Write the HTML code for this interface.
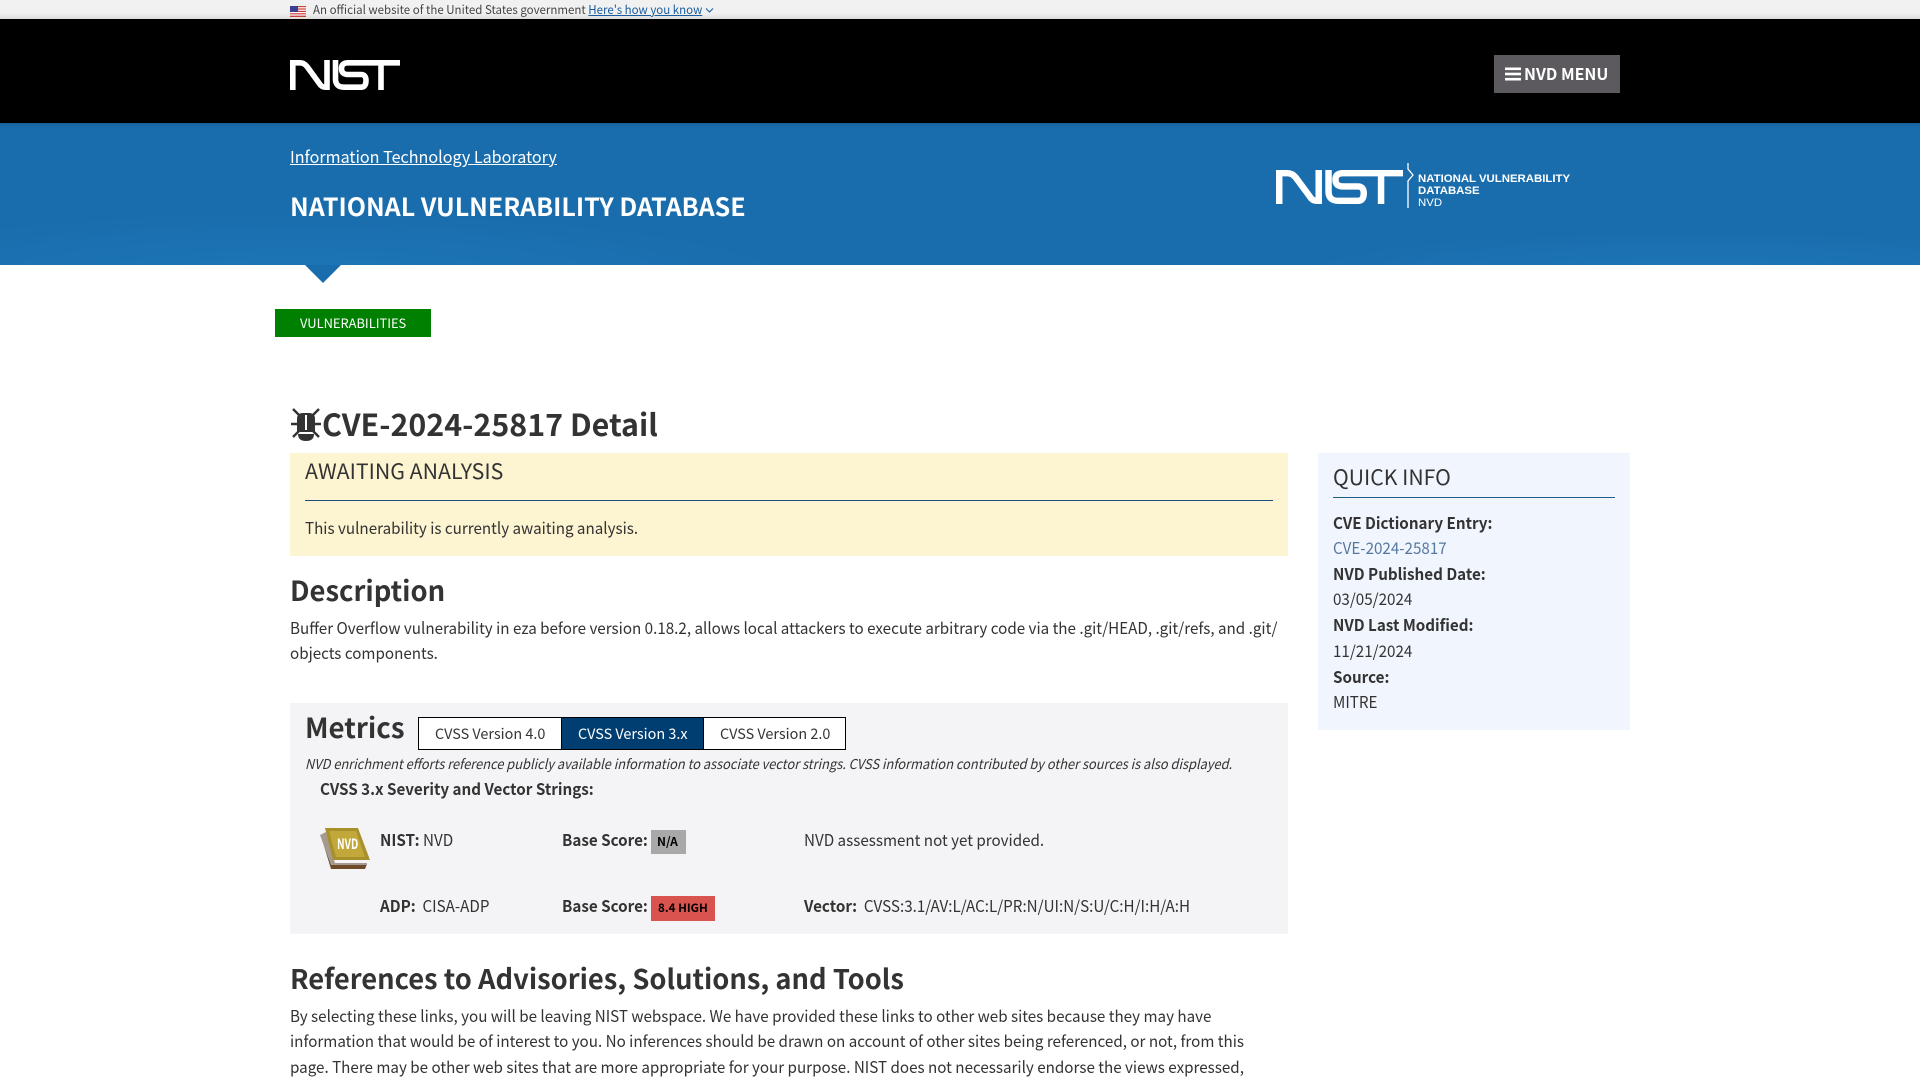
<!DOCTYPE html>
<html lang="en"><head><meta charset="utf-8"><title>NVD - CVE-2024-25817</title>
<style>
html,body{margin:0;padding:0;width:1920px;height:1080px;overflow:hidden;background:#fff}
body{position:relative;font-family:"Noto Sans CJK JP","Liberation Sans",sans-serif;color:#333;font-size:16px}
.t{position:absolute;white-space:nowrap;line-height:26px;transform:scaleX(.949);transform-origin:0 50%}
.h{transform:none}
.b{font-weight:700}
.box{position:absolute}
</style></head><body>
<div class="box" style="left:0;top:0;width:1920px;height:19px;background:linear-gradient(#f1f1f1,#f1f1f1 70%,#dcdcdc)"></div>
<svg class="box" style="left:290px;top:6px" width="16" height="11" viewBox="0 0 16 11"><rect width="16" height="11" fill="#fff"/><g fill="#c8423c"><rect width="16" height="1.2"/><rect y="2.4" width="16" height="1.2"/><rect y="4.8" width="16" height="1.2"/><rect y="7.2" width="16" height="1.2"/><rect y="9.6" width="16" height="1.4"/></g><rect width="8" height="6" fill="#3a3f8f"/></svg>
<div class="t" style="left:313px;top:0;font-size:12px;line-height:19px;color:#454545;transform:scaleX(.958)">An official website of the United States government <span style="color:#1a5c9e;text-decoration:underline">Here's how you know </span></div>
<svg class="box" style="left:705px;top:7px" width="9" height="7" viewBox="0 0 9 7"><path d="M1 1.5L4.5 5L8 1.5" fill="none" stroke="#1a5c9e" stroke-width="1.1"/></svg>

<div class="box" style="left:0;top:19px;width:1920px;height:104px;background:#000"></div>
<svg class="box" style="left:290px;top:60px" width="110" height="30" viewBox="0 0 110 30"><g fill="none" stroke="#fff" stroke-width="5.6"><path d="M2.8 30V2.8H10Q14 2.8 17 6.5L29 23Q31.5 27.2 35 27.2H37V0"/><path d="M45.5 0V19Q45.5 27.2 54 27.2H71Q76 27.2 76 20.5Q76 14.5 71 14.5H58Q51.5 14.5 51.5 8.5Q51.5 2.8 58 2.8H110"/><path d="M91 3V30"/></g></svg>
<div class="box" style="left:1494px;top:55px;width:126px;height:38px;background:#5c5a5e"></div>
<svg class="box" style="left:1505px;top:67px" width="16" height="14" viewBox="0 0 16 14"><g fill="#fff"><rect width="16" height="2.6" y="0.5"/><rect width="16" height="2.6" y="5.7"/><rect width="16" height="2.6" y="10.9"/></g></svg>
<div class="t b" style="left:1524px;top:60px;font-size:16px;color:#fff;transform:scaleX(1)">NVD MENU</div>

<div class="box" style="left:0;top:123px;width:1920px;height:142px;background:linear-gradient(#165f98,#1a6dad 4px,transparent 7px),radial-gradient(ellipse 500px 70px at 300px 160px,#1c77b9,transparent),radial-gradient(ellipse 600px 60px at 1200px 200px,#1c75b7,transparent),radial-gradient(ellipse 400px 40px at 1700px 150px,#1c77b9,transparent),#1a6dad"></div>
<div class="box" style="left:305px;top:265px;width:0;height:0;border-left:18px solid transparent;border-right:18px solid transparent;border-top:18px solid #1a6dad"></div>
<div class="t" style="left:290px;top:143px;font-size:16.5px;color:#fff;text-decoration:underline;transform:scaleX(.977)">Information Technology Laboratory</div>
<div class="t b h" style="left:290px;top:193px;font-size:25px;color:#fff">NATIONAL VULNERABILITY DATABASE</div>
<svg class="box" style="left:1276px;top:170px" width="127" height="34" viewBox="0 0 110 30" preserveAspectRatio="none"><g fill="none" stroke="#fff" stroke-width="5.6"><path d="M2.8 30V2.8H10Q14 2.8 17 6.5L29 23Q31.5 27.2 35 27.2H37V0"/><path d="M45.5 0V19Q45.5 27.2 54 27.2H71Q76 27.2 76 20.5Q76 14.5 71 14.5H58Q51.5 14.5 51.5 8.5Q51.5 2.8 58 2.8H110"/><path d="M91 3V30"/></g></svg>
<svg class="box" style="left:1406px;top:163px" width="8" height="46" viewBox="0 0 8 46"><path d="M2 0V6L7 12L2 18V45" fill="none" stroke="#fff" stroke-width="1.3"/></svg>
<div class="t h" style="left:1418px;top:173px;font:700 11.4px/12px 'Liberation Sans',sans-serif;color:#fff">NATIONAL VULNERABILITY<br>DATABASE<br><span style="font-weight:400">NVD</span></div>

<div class="box" style="left:275px;top:309px;width:156px;height:28px;background:#008000"></div>
<div class="t h" style="left:300px;top:310px;font-size:12.9px;color:#fff">VULNERABILITIES</div>

<svg class="box" style="left:290px;top:408px" width="32" height="33" viewBox="0 0 32 33" fill="#333"><path fill-rule="evenodd" d="M7 24V11Q7 5 13 5H19Q25 5 25 11V24ZM15 7V22H17V7Z"/><path d="M8 26H24Q24 33 16 33Q8 33 8 26Z"/><g stroke="#333" stroke-width="2.4" fill="none"><path d="M3 1L9 7M29 1L23 7M1 16H7M31 16H25M3 29L9 23M29 29L23 23"/></g></svg>
<div class="t b h" style="left:322px;top:403px;font-size:30.4px;line-height:40px">CVE-2024-25817 Detail</div>

<div class="box" style="left:290px;top:453px;width:998px;height:103px;background:#fdf4d1"></div>
<div class="t h" style="left:305px;top:456px;font-size:21.3px;line-height:30px">AWAITING ANALYSIS</div>
<div class="box" style="left:305px;top:500px;width:968px;height:1px;background:#1d4f7c"></div>
<div class="t" style="left:305px;top:514px">This vulnerability is currently awaiting analysis.</div>

<div class="t b h" style="left:290px;top:571px;font-size:27.4px;line-height:36px">Description</div>
<div class="t" style="left:290px;top:614px">Buffer Overflow vulnerability in eza before version 0.18.2, allows local attackers to execute arbitrary code via the .git/HEAD, .git/refs, and .git/</div>
<div class="t" style="left:290px;top:639px">objects components.</div>

<div class="box" style="left:290px;top:703px;width:998px;height:231px;background:#f4f4f6"></div>
<div class="t b h" style="left:305px;top:707px;font-size:27.6px;line-height:38px">Metrics</div>
<div class="box" style="left:418px;top:717px;width:428px;height:33px;border:1px solid #000;box-sizing:border-box;background:#fff"></div>
<div class="box" style="left:561px;top:717px;width:143px;height:33px;background:#003e72;border:1px solid #000;box-sizing:border-box"></div>
<div class="t h" style="left:435px;top:721px;font-size:14.4px">CVSS Version 4.0</div>
<div class="t h" style="left:578px;top:721px;font-size:14.4px;color:#fff">CVSS Version 3.x</div>
<div class="t h" style="left:720px;top:721px;font-size:14.4px">CVSS Version 2.0</div>
<div class="t" style="left:305px;top:750px;font-size:13.6px;font-style:italic;transform:scaleX(.944)">NVD enrichment efforts reference publicly available information to associate vector strings. CVSS information contributed by other sources is also displayed.</div>
<div class="t b" style="left:320px;top:775px">CVSS 3.x Severity and Vector Strings:</div>

<svg class="box" style="left:320px;top:827px" width="51" height="43" viewBox="0 0 51 43"><path d="M1 9L11 42H45L47 37H14L6 8Z" fill="#6e4a28"/><path d="M0 8L6 5L15 36H47L47 38H11Z" fill="#a49a90"/><path d="M5 1H38L50 33H13Z" fill="#a8912a"/><path d="M9 4H36L45 30H16Z" fill="#c2a83a"/></svg>
<div class="box" style="left:337px;top:832px;font:700 12px/24px 'Noto Sans CJK JP',sans-serif;color:#fff;transform:scale(.85,1.2);transform-origin:0 50%">NVD</div>

<div class="t" style="left:380px;top:826px"><span class="b">NIST:</span> NVD</div>
<div class="t b" style="left:562px;top:826px">Base Score:</div>
<div class="box" style="left:651px;top:830px;width:35px;height:24px;background:#a8a8a8"></div>
<div class="t b h" style="left:657px;top:830px;font-size:12px;line-height:24px;color:#000">N/A</div>
<div class="t" style="left:804px;top:826px">NVD assessment not yet provided.</div>

<div class="t" style="left:380px;top:892px"><span class="b">ADP:</span>&nbsp; CISA-ADP</div>
<div class="t b" style="left:562px;top:892px">Base Score:</div>
<div class="box" style="left:651px;top:896px;width:64px;height:25px;background:#d9534f"></div>
<div class="t b h" style="left:658px;top:896px;font-size:11.6px;line-height:25px;color:#000">8.4 HIGH</div>
<div class="t" style="left:804px;top:892px"><span class="b">Vector:</span>&nbsp; CVSS:3.1/AV:L/AC:L/PR:N/UI:N/S:U/C:H/I:H/A:H</div>

<div class="t b h" style="left:290px;top:959px;font-size:27.3px;line-height:36px">References to Advisories, Solutions, and Tools</div>
<div class="t" style="left:290px;top:1002px">By selecting these links, you will be leaving NIST webspace. We have provided these links to other web sites because they may have</div>
<div class="t" style="left:290px;top:1027px">information that would be of interest to you. No inferences should be drawn on account of other sites being referenced, or not, from this</div>
<div class="t" style="left:290px;top:1053px">page. There may be other web sites that are more appropriate for your purpose. NIST does not necessarily endorse the views expressed,</div>

<div class="box" style="left:1318px;top:453px;width:312px;height:277px;background:#f1f6fe"></div>
<div class="t h" style="left:1333px;top:462px;font-size:21.2px;line-height:30px">QUICK INFO</div>
<div class="box" style="left:1333px;top:497px;width:282px;height:1px;background:#1d5f88"></div>
<div class="t b" style="left:1333px;top:509px">CVE Dictionary Entry:</div>
<div class="t" style="left:1333px;top:534px;color:#56789f">CVE-2024-25817</div>
<div class="t b" style="left:1333px;top:560px">NVD Published Date:</div>
<div class="t" style="left:1333px;top:585px">03/05/2024</div>
<div class="t b" style="left:1333px;top:611px">NVD Last Modified:</div>
<div class="t" style="left:1333px;top:637px">11/21/2024</div>
<div class="t b" style="left:1333px;top:663px">Source:</div>
<div class="t" style="left:1333px;top:688px">MITRE</div>
</body></html>
